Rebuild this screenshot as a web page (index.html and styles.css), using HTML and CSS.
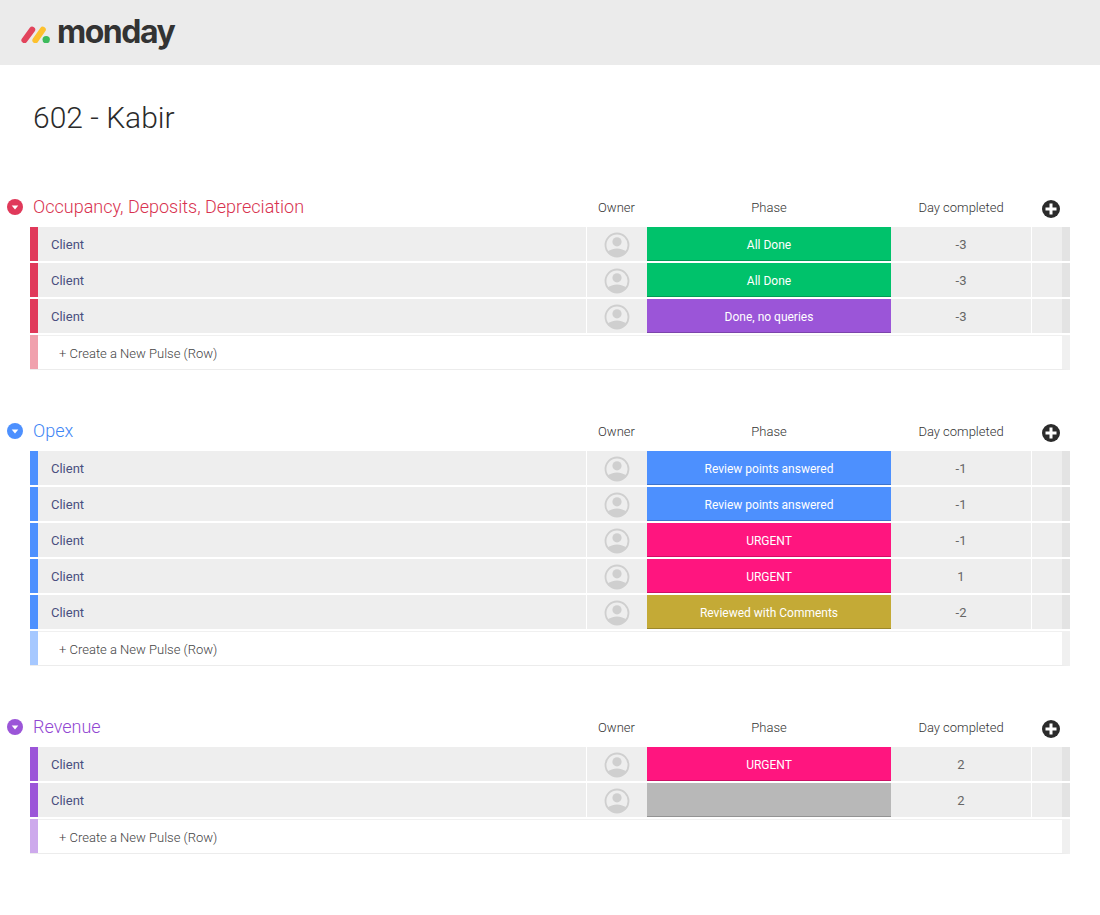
FILE: index.html
```html
<!DOCTYPE html>
<html lang="en">
<head>
  <meta charset="UTF-8" />
  <title>602 - Kabir</title>
  <link rel="stylesheet" href="styles.css">
</head>
<body>

  <svg class="icon-defs" width="0" height="0" aria-hidden="true">
    <defs>
      <symbol id="avatar" viewBox="0 0 26 26">
        <clipPath id="avatar-clip"><circle cx="13" cy="13" r="11.5" /></clipPath>
        <circle cx="13" cy="13" r="11.5" fill="none" stroke="#cfcfcf" stroke-width="1.8" />
        <circle cx="13" cy="9.8" r="4.6" fill="#cfcfcf" />
        <path d="M2 26 V22 C3 19 6 18 8.5 17.2 C11 16.4 15 16.4 17.5 17.2 C20 18 23 19 24 22 V26 Z" fill="#cfcfcf" clip-path="url(#avatar-clip)" />
      </symbol>
      <symbol id="caret" viewBox="0 0 16 16">
        <circle cx="8" cy="8" r="8" fill="currentColor" />
        <path d="M4.7 6.4 H11.3 L8 10.4 Z" fill="#fff" />
      </symbol>
      <symbol id="add" viewBox="0 0 18 18">
        <circle cx="9" cy="9" r="9" fill="#2b2b2b" />
        <path d="M9 3.5 V14.5 M3.5 9 H14.5" stroke="#fff" stroke-width="3" />
      </symbol>
    </defs>
  </svg>

  <header class="topbar">
    <svg class="logo-mark" width="32" height="20" viewBox="0 0 32 20">
      <line x1="4.4" y1="17.2" x2="12.2" y2="6.6" stroke="#e2445c" stroke-width="6" stroke-linecap="round" />
      <line x1="15.4" y1="17.2" x2="22.8" y2="6.6" stroke="#fdc12e" stroke-width="6" stroke-linecap="round" />
      <circle cx="26.2" cy="16.6" r="3.7" fill="#3dbb5c" />
    </svg>
    <span class="logo-text">monday</span>
  </header>

  <h1 class="board-title">602 - Kabir</h1>

  <section class="group group-red">
    <div class="group-head">
      <svg class="caret" width="16" height="16"><use href="#caret" /></svg>
      <h2>Occupancy, Deposits, Depreciation</h2>
      <span>Owner</span>
      <span>Phase</span>
      <span>Day completed</span>
      <svg class="add" width="18" height="18"><use href="#add" /></svg>
    </div>
    <div class="row">
      <div class="bar"></div><div class="name">Client</div>
      <div class="owner"><svg width="26" height="26"><use href="#avatar" /></svg></div>
      <div class="phase st-green">All Done</div><div class="day">-3</div><div class="blank"></div><div class="end"></div>
    </div>
    <div class="row">
      <div class="bar"></div><div class="name">Client</div>
      <div class="owner"><svg width="26" height="26"><use href="#avatar" /></svg></div>
      <div class="phase st-green">All Done</div><div class="day">-3</div><div class="blank"></div><div class="end"></div>
    </div>
    <div class="row">
      <div class="bar"></div><div class="name">Client</div>
      <div class="owner"><svg width="26" height="26"><use href="#avatar" /></svg></div>
      <div class="phase st-purple">Done, no queries</div><div class="day">-3</div><div class="blank"></div><div class="end"></div>
    </div>
    <div class="create">
      <div class="bar"></div><div class="create-label">+ Create a New Pulse (Row)</div>
    </div>
  </section>

  <section class="group group-blue">
    <div class="group-head">
      <svg class="caret" width="16" height="16"><use href="#caret" /></svg>
      <h2>Opex</h2>
      <span>Owner</span>
      <span>Phase</span>
      <span>Day completed</span>
      <svg class="add" width="18" height="18"><use href="#add" /></svg>
    </div>
    <div class="row">
      <div class="bar"></div><div class="name">Client</div>
      <div class="owner"><svg width="26" height="26"><use href="#avatar" /></svg></div>
      <div class="phase st-blue">Review points answered</div><div class="day">-1</div><div class="blank"></div><div class="end"></div>
    </div>
    <div class="row">
      <div class="bar"></div><div class="name">Client</div>
      <div class="owner"><svg width="26" height="26"><use href="#avatar" /></svg></div>
      <div class="phase st-blue">Review points answered</div><div class="day">-1</div><div class="blank"></div><div class="end"></div>
    </div>
    <div class="row">
      <div class="bar"></div><div class="name">Client</div>
      <div class="owner"><svg width="26" height="26"><use href="#avatar" /></svg></div>
      <div class="phase st-pink">URGENT</div><div class="day">-1</div><div class="blank"></div><div class="end"></div>
    </div>
    <div class="row">
      <div class="bar"></div><div class="name">Client</div>
      <div class="owner"><svg width="26" height="26"><use href="#avatar" /></svg></div>
      <div class="phase st-pink">URGENT</div><div class="day">1</div><div class="blank"></div><div class="end"></div>
    </div>
    <div class="row">
      <div class="bar"></div><div class="name">Client</div>
      <div class="owner"><svg width="26" height="26"><use href="#avatar" /></svg></div>
      <div class="phase st-gold">Reviewed with Comments</div><div class="day">-2</div><div class="blank"></div><div class="end"></div>
    </div>
    <div class="create">
      <div class="bar"></div><div class="create-label">+ Create a New Pulse (Row)</div>
    </div>
  </section>

  <section class="group group-purple">
    <div class="group-head">
      <svg class="caret" width="16" height="16"><use href="#caret" /></svg>
      <h2>Revenue</h2>
      <span>Owner</span>
      <span>Phase</span>
      <span>Day completed</span>
      <svg class="add" width="18" height="18"><use href="#add" /></svg>
    </div>
    <div class="row">
      <div class="bar"></div><div class="name">Client</div>
      <div class="owner"><svg width="26" height="26"><use href="#avatar" /></svg></div>
      <div class="phase st-pink">URGENT</div><div class="day">2</div><div class="blank"></div><div class="end"></div>
    </div>
    <div class="row">
      <div class="bar"></div><div class="name">Client</div>
      <div class="owner"><svg width="26" height="26"><use href="#avatar" /></svg></div>
      <div class="phase st-grey"></div><div class="day">2</div><div class="blank"></div><div class="end"></div>
    </div>
    <div class="create">
      <div class="bar"></div><div class="create-label">+ Create a New Pulse (Row)</div>
    </div>
  </section>

</body>
</html>
```

FILE: styles.css
```css
/* Reset */
* {
  margin: 0;
  padding: 0;
  box-sizing: border-box;
}

body {
  font-family: 'Roboto', sans-serif;
  font-weight: 300;
  background: #fff;
  color: #333;
}

.icon-defs {
  position: absolute;
}

/* Top bar */
.topbar {
  height: 65px;
  background: #ebebeb;
  padding: 0 0 0 20px;
  display: flex;
  align-items: center;
  gap: 5px;
}

.logo-mark {
  margin-top: 1px;
}

.logo-text {
  font-family: 'Inter', sans-serif;
  font-size: 32px;
  font-weight: 700;
  letter-spacing: -1.5px;
  color: #333;
  margin-top: -2px;
}

.board-title {
  font-size: 30px;
  font-weight: 300;
  line-height: 40px;
  color: #2b2b2b;
  padding: 33px 0 0 33px;
  height: 122px;
}

/* Groups */
.group {
  margin-bottom: 41px;
}

.group-red { --accent: #e0395a; --accent-light: #f0a1ad; --title: #d8324f; }
.group-blue { --accent: #4d90fe; --accent-light: #a6c8ff; --title: #3f86f5; }
.group-purple { --accent: #9b55d8; --accent-light: #cda9ec; --title: #9146d2; }

.group-head {
  height: 40px;
  display: grid;
  grid-template-columns: 33px 553px 61px 244px 140px 39px;
  align-items: center;
  font-size: 13px;
  color: #333;
}

.group-head span {
  text-align: center;
}

.group-head h2 {
  font-size: 18px;
  font-weight: 300;
  line-height: 20px;
  margin-top: -1px;
  color: var(--title);
}

.caret {
  color: var(--accent);
  margin-left: 7px;
}

.add {
  margin-top: 4px;
  margin-left: 10.5px;
}

/* Rows */
.row {
  display: grid;
  grid-template-columns: 8px 548px 61px 244px 140px 31px 8px;
  grid-template-rows: 34px;
  height: 34px;
  margin: 0 30px 2px;
  font-size: 13px;
  line-height: 32px;
}

.bar {
  background: var(--accent);
}

.name {
  background: #eee;
  color: #4a5080;
  font-weight: 400;
  padding: 2px 0 0 13px;
}

.owner {
  background: #eee;
  border-left: 1px solid #fff;
  display: flex;
  align-items: center;
  justify-content: center;
}

.owner svg {
  margin: 2px 1px 0 0;
}

.phase {
  color: #fff;
  font-weight: 400;
  text-align: center;
  font-size: 12px;
  padding-top: 2px;
  border-bottom: 1px solid rgba(0, 0, 0, 0.2);
}

.day {
  background: #eee;
  color: #666;
  text-align: center;
  font-weight: 400;
  padding-top: 2px;
}

.blank {
  background: #eee;
  border-left: 1px solid #fff;
}

.end {
  background: #e3e3e3;
}

.st-green { background: #00c26b; }
.st-purple { background: #9b55d8; }
.st-blue { background: #4d90fe; }
.st-pink { background: #ff157f; }
.st-gold { background: #c4aa36; }
.st-grey { background: #b8b8b8; }

/* Create row */
.create {
  display: grid;
  grid-template-columns: 8px 1fr;
  grid-template-rows: 34px;
  height: 35px;
  margin: 0 30px;
  border-right: 8px solid #f0f0f0;
  border-bottom: 1px solid #ececec;
}

.create .bar {
  background: var(--accent-light);
}

.create-label {
  font-size: 13px;
  line-height: 32px;
  padding: 2px 0 0 21px;
  border-top: 1px solid #f0f0f0;
  color: #444;
  font-weight: 300;
}
```
